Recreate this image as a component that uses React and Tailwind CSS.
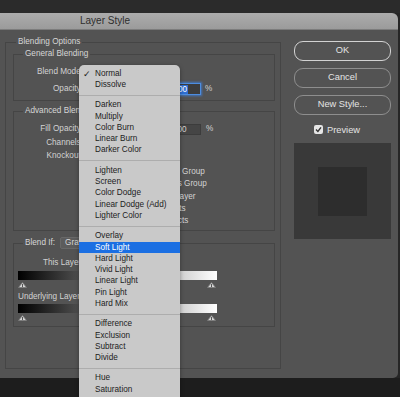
import React from 'react';

const menuItems = [
  ['Normal', 'check'], ['Dissolve'], 'sep',
  ['Darken'], ['Multiply'], ['Color Burn'], ['Linear Burn'], ['Darker Color'], 'sep',
  ['Lighten'], ['Screen'], ['Color Dodge'], ['Linear Dodge (Add)'], ['Lighter Color'], 'sep',
  ['Overlay'], ['Soft Light', 'sel'], ['Hard Light'], ['Vivid Light'], ['Linear Light'], ['Pin Light'], ['Hard Mix'], 'sep',
  ['Difference'], ['Exclusion'], ['Subtract'], ['Divide'], 'sep',
  ['Hue'], ['Saturation'],
];

function Tri() {
  return (
    <svg width="9" height="6" viewBox="0 0 9 6">
      <path d="M4.5 0.5 L8.5 5.5 L0.5 5.5 Z" fill="#d6d6d6" stroke="#7a7a7a" strokeWidth="0.8" />
      <path d="M4.5 2 V5" stroke="#555" strokeWidth="1" />
    </svg>
  );
}

function Label({ children }) {
  return <div className="w-[69px] shrink-0 text-right leading-[10px]">{children}</div>;
}

function SmallCheck() {
  return <div className="w-[8px] h-[8px] rounded-[2px] bg-[#dcdcdc] border border-[#6a6a6a] shrink-0" />;
}

export default function App() {
  return (
    <div className="w-[400px] h-[397px] bg-[#262626] overflow-hidden relative font-['Liberation_Sans',Arial,sans-serif] text-[8.2px] text-[#d2d2d2]">
      <div className="h-[13px] bg-[#2b2b2b]" />
      <div className="mr-[2px] h-[365px] flex flex-col rounded-tr-[6px] rounded-br-[5px] overflow-hidden">
        <div className="h-[17px] shrink-0 bg-[linear-gradient(#acacac,#9b9b9b)] border-b border-[#7c7c7c] flex items-center pl-[80px]">
          <span className="text-[10px] leading-[12px] text-[#2e2e2e]">Layer Style</span>
        </div>
        <div className="flex-1 bg-[#535353] flex pl-[5px]">
          {/* Left column */}
          <fieldset className="mt-[7px] w-[276px] self-start border border-[#454545] pb-[41px]">
            <legend className="ml-[10px] px-[2px] leading-[10px] text-[#d6d6d6]">Blending Options</legend>

            {/* General Blending */}
            <fieldset className="mt-[2px] ml-[7px] mr-[5px] border border-[#454545] pt-[6px] pb-[4px]">
              <legend className="ml-[9px] px-[2px] leading-[10px] text-[#d6d6d6]">General Blending</legend>
              <div className="flex items-center h-[14px]">
                <Label>Blend Mode:</Label>
                <div className="ml-[4px] w-[90px] h-[12px] rounded-[3px] bg-[#6a6a6a] px-[4px] leading-[12px]">Soft Light</div>
              </div>
              <div className="flex items-center h-[14px] mt-[3px]">
                <Label>Opacity:</Label>
                <div className="w-[86px] flex items-center pl-[6px] pr-[8px]">
                  <div className="h-[2px] flex-1 bg-[#3a3a3a]" />
                </div>
                <div className="w-[32px] h-[12px] bg-[#3d3d3d] border border-[#4d8de0] shadow-[0_0_2px_1px_rgba(60,130,230,0.7)] flex items-center pl-[3px]">
                  <span className="bg-[#2f6fd3] text-white leading-[9px] px-[0.5px]">100</span>
                </div>
                <span className="ml-[4px] leading-[10px]">%</span>
              </div>
            </fieldset>

            {/* Advanced Blending */}
            <fieldset className="mt-[5px] ml-[7px] mr-[5px] border border-[#454545] pt-[6px] pb-[3px]">
              <legend className="ml-[9px] px-[2px] leading-[10px] text-[#d6d6d6]">Advanced Blending</legend>
              <div className="flex items-center h-[14px]">
                <Label>Fill Opacity:</Label>
                <div className="w-[86px] flex items-center pl-[6px] pr-[8px]">
                  <div className="h-[2px] flex-1 bg-[#3a3a3a]" />
                </div>
                <div className="w-[32px] h-[11px] bg-[#454545] border border-[#3c3c3c] flex items-center pl-[3px] leading-[9px]">100</div>
                <span className="ml-[5px] leading-[10px]">%</span>
              </div>
              <div className="flex items-center h-[13px]">
                <Label>Channels:</Label>
                <div className="ml-[6px] flex items-center gap-[3px]">
                  <SmallCheck /><span>R</span><SmallCheck /><span>G</span><SmallCheck /><span>B</span>
                </div>
              </div>
              <div className="flex items-center h-[14px]">
                <Label>Knockout:</Label>
                <div className="ml-[4px] w-[50px] h-[11px] rounded-[3px] bg-[#6a6a6a] px-[4px] leading-[11px]">None</div>
              </div>
              <div className="mt-[3px] flex flex-col">
                {['Blend Interior Effects as Group', 'Blend Clipped Layers as Group', 'Transparency Shapes Layer', 'Layer Mask Hides Effects', 'Vector Mask Hides Effects'].map((t) => (
                  <div key={t} className="h-[12.25px] flex items-center pl-[68px] gap-[3px] whitespace-nowrap">
                    <SmallCheck />
                    <span className="leading-[10px]">{t}</span>
                  </div>
                ))}
              </div>
            </fieldset>

            {/* Blend If */}
            <fieldset className="mt-[6px] ml-[7px] mr-[5px] border border-[#454545] pb-[5px]">
              <legend className="ml-[9px] px-[2px] flex items-center h-[12px]">
                <span className="leading-[10px] text-[#d6d6d6]">Blend If:</span>
                <div className="ml-[5px] w-[80px] h-[12px] rounded-[2px] bg-[#5c5c5c] border border-[#686868] pl-[4px] leading-[10px] text-[#d6d6d6]">Gray</div>
              </legend>
              <div className="mt-[9px] h-[10px] leading-[10px] pl-[29px]">This Layer:</div>
              <div className="mt-[3px] ml-[4px] w-[199px] h-[9px] bg-[linear-gradient(to_right,#000,#fff)]" />
              <div className="mt-[2px] ml-[4px] w-[199px] h-[6px] flex justify-between pr-[1px]">
                <Tri /><Tri />
              </div>
              <div className="mt-[4px] h-[10px] leading-[10px] pl-[4px]">Underlying Layer:</div>
              <div className="mt-[2px] ml-[4px] w-[199px] h-[9px] bg-[linear-gradient(to_right,#000,#fff)]" />
              <div className="mt-[2px] ml-[4px] w-[199px] h-[6px] flex justify-between pr-[1px]">
                <Tri /><Tri />
              </div>
            </fieldset>
          </fieldset>

          {/* Right column */}
          <div className="ml-[13px] w-[97px] mt-[11px] flex flex-col text-[9.3px] text-[#e4e4e4]">
            <div className="h-[20px] rounded-[9px] border border-[#d2d2d2] flex items-center justify-center">OK</div>
            <div className="mt-[7px] h-[20px] rounded-[9px] border border-[#8e8e8e] flex items-center justify-center">Cancel</div>
            <div className="mt-[7px] h-[20px] rounded-[9px] border border-[#8e8e8e] flex items-center justify-center">New Style...</div>
            <div className="mt-[10px] h-[9px] flex items-center pl-[20px]">
              <div className="w-[9px] h-[9px] rounded-[2px] bg-[#e6e6e6] flex items-center justify-center">
                <svg width="7" height="7" viewBox="0 0 7 7">
                  <path d="M1 3.6 L2.9 5.4 L6 1.4" fill="none" stroke="#333" strokeWidth="1.4" />
                </svg>
              </div>
              <span className="ml-[4px] leading-[10px]">Preview</span>
            </div>
            <div className="mt-[9px] h-[96px] bg-[#393939] flex items-center justify-center">
              <div className="w-[49px] h-[49px] bg-[#2d2d2d]" />
            </div>
          </div>
        </div>
      </div>
      <div className="h-[19px] bg-[#1d1d1d]" />

      {/* Blend mode dropdown menu */}
      <div className="absolute left-[79px] top-[65px] w-[101px] h-[340px] bg-[#c9c9c9] rounded-t-[5px] shadow-[0_1px_4px_rgba(0,0,0,0.35)] pt-[3px] text-[#1c1c1c] overflow-hidden">
        {menuItems.map((it, i) =>
          it === 'sep' ? (
            <div key={i} className="h-[9px] flex items-center">
              <div className="h-[1px] w-full bg-[#adadad]" />
            </div>
          ) : (
            <div
              key={i}
              className={
                it[1] === 'sel'
                  ? 'h-[11.3px] flex items-center bg-[#1b6fe2] text-white whitespace-nowrap'
                  : 'h-[11.3px] flex items-center whitespace-nowrap'
              }
            >
              <span className="w-[16px] pl-[4px] text-[9px] leading-[10px] font-['DejaVu_Sans',sans-serif]">
                {it[1] === 'check' ? '✓' : ''}
              </span>
              <span className="leading-[10px]">{it[0]}</span>
            </div>
          )
        )}
      </div>
    </div>
  );
}
